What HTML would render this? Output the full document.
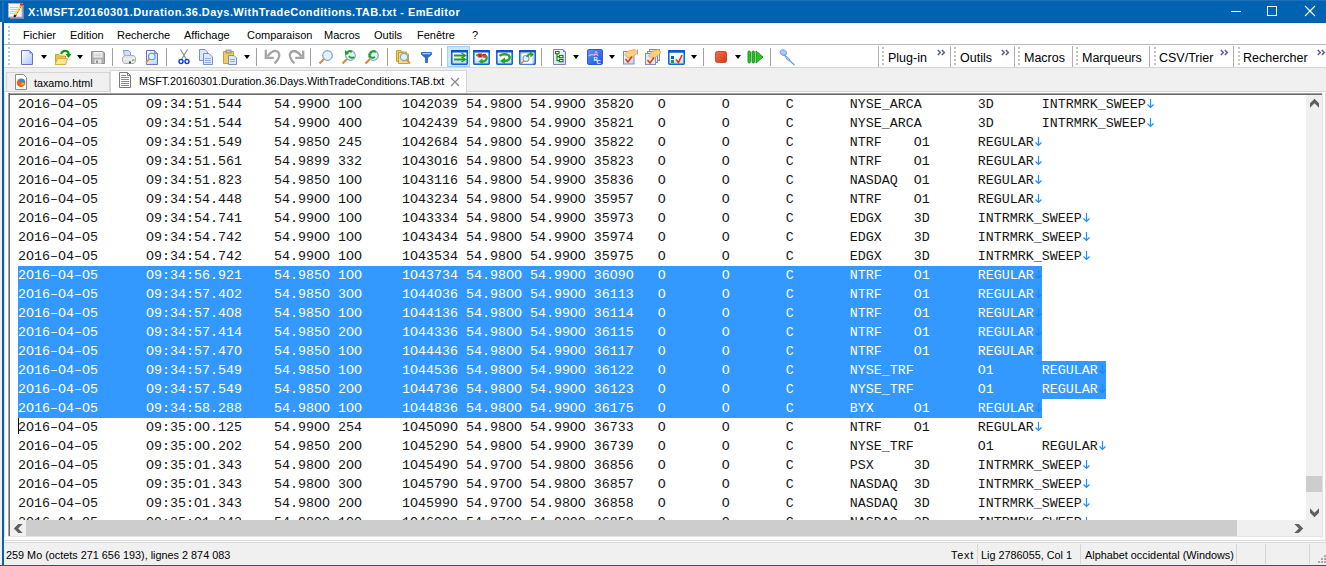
<!DOCTYPE html>
<html><head><meta charset="utf-8">
<style>
*{margin:0;padding:0;box-sizing:border-box}
html,body{width:1326px;height:566px;overflow:hidden;background:#f0f0f0;font-family:"Liberation Sans",sans-serif}
.a{position:absolute}
#title{left:0;top:0;width:1326px;height:23px;background:#0063b1}
#title .tl{left:0;top:22px;width:2px;height:1px;background:#f0f0f0}
#ttext{left:28px;top:5px;color:#fff;font-weight:bold;font-size:11px;letter-spacing:0.43px;white-space:nowrap;line-height:15px}
#lborder{left:2px;top:0;width:2px;height:566px;background:#0063b1}
#lborder2{left:2px;top:0;width:2px;height:22px;background:#1a70bb}
#bborder{left:0;top:565px;width:1326px;height:1px;background:#0063b1}
#menu{left:4px;top:23px;width:1322px;height:21px;background:#fff}
#menusep{left:4px;top:44px;width:1322px;height:1px;background:#b9b9b9}
.mi{position:absolute;top:6px;font-size:11px;line-height:13px;color:#000;white-space:nowrap}
#tb{left:4px;top:45px;width:1322px;height:22px;background:#fff}
#tbsep{left:4px;top:67px;width:1322px;height:1px;background:#d4d4d4}
.grip{position:absolute;width:2px;background-image:linear-gradient(#c4c4c4 50%,transparent 50%);background-size:2px 4px}
.vsep{position:absolute;width:1px;background:#a0a0a0}
.dd{position:absolute;width:0;height:0;border-left:3.5px solid transparent;border-right:3.5px solid transparent;border-top:4px solid #000}
.tbt{position:absolute;top:8px;font-size:12.5px;line-height:13px;color:#000;white-space:nowrap}
.chev{position:absolute;top:3px;font-size:9px;color:#404080;line-height:9px;letter-spacing:-1px}
#tabs{left:4px;top:68px;width:1322px;height:25px;background:#f0f0f0}
#tab1{left:6px;top:72px;width:104px;height:20px;background:#f0f0f0;border:1px solid #d5d5d5}
#tab2{left:110px;top:70px;width:357px;height:23px;background:#fff;border:1px solid #d5d5d5;border-bottom:none}
.tabt{position:absolute;font-size:10.75px;line-height:13px;color:#000;white-space:nowrap}
#ed{left:8px;top:93px;width:1315px;height:444px;background:#fff}
#edtop{left:8px;top:93px;width:1315px;height:2px;background:#696969;border-top:1px solid #a0a0a0}
#edleft{left:8px;top:93px;width:2px;height:444px;background:#696969;border-left:1px solid #a0a0a0}
#edbot{left:8px;top:536px;width:1315px;height:1px;background:#e3e3e3}
#edright{left:1322px;top:93px;width:1px;height:444px;background:#e3e3e3}
.row{position:absolute;left:18px;height:19px;width:1288px}
.row .t{position:absolute;left:0;top:0;font-family:"Liberation Mono",monospace;font-size:13.333px;line-height:19px;white-space:pre;color:#161616}
.row .nl{position:absolute;top:0;stroke:#1e90ff}
.row.sel .t{color:#fff}
.row.sel .nl{stroke:#1a88f8}
.selbg{position:absolute;left:0;top:0;height:19px;background:#3399ff}
#rows{left:0;top:0;width:1306px;height:520px;overflow:hidden}
#vsb{left:1306px;top:95px;width:16px;height:425px;background:#f0f0f0}
#hsb{left:10px;top:520px;width:1296px;height:16px;background:#f0f0f0}
#corner{left:1306px;top:520px;width:16px;height:16px;background:#f0f0f0}
#status{left:4px;top:537px;width:1322px;height:28px;background:#f0f0f0;border-top:3px solid #fff}
#stl1{left:4px;top:540px;width:1322px;height:1px;background:#d8d8d8}
#stl2{left:4px;top:541px;width:1322px;height:1px;background:#fff}
#stl3{left:4px;top:542px;width:1322px;height:1px;background:#d8d8d8}
.st{position:absolute;top:549px;font-size:10.85px;line-height:13px;color:#000;white-space:nowrap}
.ssep{position:absolute;top:544px;width:1px;height:20px;background:#d7d7d7}
</style></head><body>
<div class="a" id="title">
 <svg class="a" style="left:6px;top:2px" width="18" height="18" viewBox="0 0 18 18">
  <rect x="4" y="3" width="14" height="14" fill="#8088a8"/>
  <rect x="2.5" y="1.5" width="13.5" height="13.5" fill="#fff" stroke="#b8a8e8" stroke-width="1"/>
  <g stroke="#c0c4f0" stroke-width="1"><line x1="4" y1="5.5" x2="12" y2="5.5"/><line x1="4" y1="7.5" x2="11" y2="7.5"/><line x1="4" y1="9.5" x2="10" y2="9.5"/><line x1="4" y1="11.5" x2="9" y2="11.5"/></g>
  <line x1="16" y1="1.5" x2="8.5" y2="14.5" stroke="#f8e040" stroke-width="2.4"/>
  <line x1="16.6" y1="2" x2="9.2" y2="14.8" stroke="#e04828" stroke-width="1" stroke-dasharray="1.5 1.5"/>
  <line x1="16" y1="1.5" x2="14.8" y2="3.6" stroke="#e83020" stroke-width="2.6"/>
  <line x1="9.4" y1="13" x2="8.3" y2="15" stroke="#181818" stroke-width="2.2"/>
 </svg>
 <div class="a" style="left:0;top:0;width:1326px;height:1px;background:#1f6fba"></div>
 <div class="a" id="ttext">X:\MSFT.20160301.Duration.36.Days.WithTradeConditions.TAB.txt - EmEditor</div>
 <svg class="a" style="left:1226px;top:0" width="100" height="23">
  <line x1="5" y1="11.5" x2="15" y2="11.5" stroke="#fff" stroke-width="1"/>
  <rect x="41.5" y="6.5" width="9" height="9" fill="none" stroke="#fff" stroke-width="1"/>
  <line x1="79" y1="6" x2="89" y2="16" stroke="#fff" stroke-width="1.1"/>
  <line x1="89" y1="6" x2="79" y2="16" stroke="#fff" stroke-width="1.1"/>
 </svg>
</div>
<div class="a" style="left:0;top:22px;width:2px;height:543px;background:#f0f0f0"></div>
<div class="a" id="lborder"></div>
<div class="a" id="lborder2"></div>

<div class="a" id="menu">
 <div class="grip" style="left:4px;top:3px;height:18px"></div>
 <div class="mi" style="left:19px">Fichier</div>
 <div class="mi" style="left:66px">Edition</div>
 <div class="mi" style="left:113px">Recherche</div>
 <div class="mi" style="left:180px">Affichage</div>
 <div class="mi" style="left:243px">Comparaison</div>
 <div class="mi" style="left:320px">Macros</div>
 <div class="mi" style="left:370px">Outils</div>
 <div class="mi" style="left:413px">Fen&ecirc;tre</div>
 <div class="mi" style="left:468px">?</div>
</div>
<div class="a" id="menusep"></div>
<div class="a" style="left:4px;top:22px;width:1322px;height:1px;background:#005aa8"></div>
<div class="a" style="left:4px;top:23px;width:1322px;height:1px;background:#faf6ee"></div>

<div class="a" id="tb"></div>
<div class="a" id="tbsep"></div>
<div class="grip" style="left:8px;top:47px;height:20px"></div>
<svg class="a" style="left:20px;top:49px" width="15" height="17" viewBox="0 0 15 17"><defs><linearGradient id="gd" x1="0" y1="0" x2="1" y2="1"><stop offset="0" stop-color="#ffffff"/><stop offset="1" stop-color="#a8c8f8"/></linearGradient></defs><path d="M1.5 1.5H9.5L12.5 4.5V15.5H1.5Z" fill="url(#gd)" stroke="#6a70c0"/><path d="M9.5 1.5L12.5 4.5H9.5Z" fill="#6a8ae0"/></svg>
<div class="dd" style="left:41px;top:55px"></div>
<svg class="a" style="left:54px;top:49px" width="18" height="17" viewBox="0 0 18 17"><path d="M1.5 5.5H5L6.5 7H11.5V15.5H1.5Z" fill="#f0c040" stroke="#d0a028"/><path d="M1 15.5L3.5 9.5H13.5L11.5 15.5Z" fill="#fce890" stroke="#d8b040"/><path d="M7 5 Q9 0.5 13.5 2.5 Q15 3.5 14.5 5.5" fill="none" stroke="#109810" stroke-width="2.2"/><path d="M11.5 5H17.5L14.5 9Z" fill="#109810"/></svg>
<div class="dd" style="left:77px;top:55px"></div>
<svg class="a" style="left:90px;top:50px" width="16" height="15" viewBox="0 0 16 15"><path d="M1.5 1.5H13L14.5 3V13.5H1.5Z" fill="#b0b0b0" stroke="#909090"/><rect x="3.5" y="2" width="9" height="5.5" fill="#f8f8f8"/><g stroke="#b8b8b8" stroke-width="0.8"><line x1="4.5" y1="4" x2="11.5" y2="4"/><line x1="4.5" y1="5.8" x2="11.5" y2="5.8"/></g><rect x="4.5" y="9.5" width="7" height="4" fill="#e8e8e8"/><rect x="6" y="10.5" width="2" height="2.5" fill="#909090"/></svg>
<div class="vsep" style="left:112px;top:48px;height:18px"></div>
<svg class="a" style="left:122px;top:50px" width="16" height="16" viewBox="0 0 16 16"><path d="M1.5 0.5H6.5L8.5 2.5V7H2.5Z" fill="#cfe2fa" stroke="#6898e0" stroke-width="0.9"/><path d="M0.5 7.5L3 5.5H12L13.5 7.5V11.5L12 13.5H2L0.5 11.5Z" fill="#e4e4e4" stroke="#a8a8a8" stroke-width="0.9"/><path d="M1.5 9H13" stroke="#f8f8f8" stroke-width="1"/><rect x="10" y="9.5" width="2.5" height="1.2" fill="#58b050"/><rect x="7" y="11.5" width="2" height="2" fill="#404858"/></svg>
<svg class="a" style="left:145px;top:50px" width="16" height="16" viewBox="0 0 16 16"><defs><linearGradient id="pv" x1="0" y1="0" x2="1" y2="1"><stop offset="0" stop-color="#ffffff"/><stop offset="1" stop-color="#b8d4f8"/></linearGradient></defs><path d="M1.5 0.5H9.5L12.5 3.5V14.5H1.5Z" fill="url(#pv)" stroke="#6870c0"/><path d="M9.5 0.5V3.5H12.5" fill="#a8c0f0" stroke="#6870c0" stroke-width="0.8"/><circle cx="6.8" cy="6.5" r="3.3" fill="#dff6ff" stroke="#6890d8" stroke-width="1.1"/><line x1="4.3" y1="9.2" x2="1" y2="12.5" stroke="#f09030" stroke-width="1.8"/></svg>
<div class="vsep" style="left:166px;top:48px;height:18px"></div>
<svg class="a" style="left:178px;top:49px" width="12" height="16" viewBox="0 0 12 16"><path d="M2.5 0.5L8.5 10.5M9.5 0.5L3.5 10.5" stroke="#8a9098" stroke-width="1.3"/><circle cx="3" cy="12.5" r="2" fill="none" stroke="#1a48c0" stroke-width="1.5"/><circle cx="9" cy="12.5" r="2" fill="none" stroke="#1a48c0" stroke-width="1.5"/></svg>
<svg class="a" style="left:198px;top:49px" width="16" height="16" viewBox="0 0 16 16"><path d="M1.5 0.5H7L9.5 3V11.5H1.5Z" fill="#dbe8fa" stroke="#7d8dc8"/><path d="M5.5 4.5H11L14.5 8V15.5H5.5Z" fill="#dbe8fa" stroke="#7d8dc8"/><g stroke="#8ab0e8"><line x1="7" y1="9.5" x2="13" y2="9.5"/><line x1="7" y1="11.5" x2="13" y2="11.5"/><line x1="7" y1="13.5" x2="13" y2="13.5"/></g></svg>
<svg class="a" style="left:222px;top:49px" width="16" height="16" viewBox="0 0 16 16"><path d="M1.5 2.5H11.5V14.5H1.5Z" fill="#f2cc5a" stroke="#c8a030"/><rect x="4" y="1" width="5" height="3" fill="#c0c0c0" stroke="#888" stroke-width="0.8"/><path d="M6.5 6.5H12L14.5 9V15.5H6.5Z" fill="#dbe8fa" stroke="#7d8dc8"/><g stroke="#8ab0e8"><line x1="8" y1="10.5" x2="13" y2="10.5"/><line x1="8" y1="12.5" x2="13" y2="12.5"/></g></svg>
<div class="dd" style="left:244px;top:55px"></div>
<div class="vsep" style="left:256px;top:48px;height:18px"></div>
<svg class="a" style="left:264px;top:49px" width="17" height="16" viewBox="0 0 17 16"><path d="M1.8 0.8V8.8H9.8" fill="none" stroke="#a4a4a4" stroke-width="2.3"/><path d="M3.5 7.5 Q7 2 11 1.8 Q15 2 15.3 5.8 Q15.3 10 10.5 14.5" fill="none" stroke="#a4a4a4" stroke-width="2.3"/></svg>
<svg class="a" style="left:288px;top:49px" width="17" height="16" viewBox="0 0 17 16"><path d="M15.2 1.8V8.8H7.2" fill="none" stroke="#a4a4a4" stroke-width="2.3"/><path d="M13.5 7.5 Q10 2.5 6.5 2 Q2 2.5 1.8 6 Q2 10 6.5 14.5" fill="none" stroke="#a4a4a4" stroke-width="2.3"/></svg>
<div class="vsep" style="left:310px;top:48px;height:18px"></div>
<svg class="a" style="left:318px;top:49px" width="16" height="16" viewBox="0 0 16 16"><line x1="6" y1="10" x2="1.5" y2="14.5" stroke="#e08830" stroke-width="2.2"/><circle cx="9.5" cy="6.5" r="4.8" fill="#e4f2ff" stroke="#7aa8d8" stroke-width="1.2"/></svg>
<svg class="a" style="left:341px;top:49px" width="16" height="16" viewBox="0 0 16 16"><line x1="6" y1="10" x2="1.5" y2="14.5" stroke="#e08830" stroke-width="2.2"/><circle cx="9.5" cy="6.5" r="4.8" fill="#e4f2ff" stroke="#7aa8d8" stroke-width="1.2"/><path d="M5 4 Q8 1 11 3" fill="none" stroke="#20a020" stroke-width="1.8"/><path d="M4 1L4 6L8 5Z" fill="#20a020"/><path d="M8 7 Q10 10 13 8" fill="none" stroke="#20a020" stroke-width="1.8"/></svg>
<svg class="a" style="left:364px;top:49px" width="16" height="16" viewBox="0 0 16 16"><line x1="6" y1="10" x2="1.5" y2="14.5" stroke="#e08830" stroke-width="2.2"/><circle cx="9.5" cy="6.5" r="4.8" fill="#e4f2ff" stroke="#7aa8d8" stroke-width="1.2"/><path d="M6 4 Q9 1 12 3" fill="none" stroke="#20a020" stroke-width="1.8"/><path d="M5 7 Q8 10 11 8" fill="none" stroke="#20a020" stroke-width="1.8"/><path d="M4 5L8 4L6 8Z" fill="#20a020"/></svg>
<div class="vsep" style="left:387px;top:48px;height:18px"></div>
<svg class="a" style="left:395px;top:49px" width="18" height="16" viewBox="0 0 18 16"><path d="M1.5 1.5H6L7 3H11.5V12.5H1.5Z" fill="#f2cc5a" stroke="#c8a030"/><path d="M3.5 3.5H8L9 5H13.5V14.5H3.5Z" fill="#f8da80" stroke="#c8a030"/><circle cx="9" cy="8" r="3.6" fill="#dff0ff" stroke="#7aa8d8" stroke-width="1.2"/><line x1="11.5" y1="10.5" x2="15" y2="14.5" stroke="#e08830" stroke-width="1.8"/></svg>
<svg class="a" style="left:421px;top:52px" width="11" height="11" viewBox="0 0 11 11"><path d="M0.5 0.5H10.5V2.5L6.5 6V10.5H4.5V6L0.5 2.5Z" fill="#2a68d8" stroke="#1a50b8" stroke-width="0.7"/><rect x="1.5" y="1" width="8" height="1.3" fill="#a8c8f8"/></svg>
<div class="vsep" style="left:441px;top:48px;height:18px"></div>
<div class="a" style="left:447px;top:46px;width:23px;height:21px;background:#cce8ff;border:1px solid #99d1ff"></div>
<svg class="a" style="left:451px;top:50px" width="17" height="15" viewBox="0 0 17 15"><defs><linearGradient id="fg451" x1="0" y1="0" x2="0" y2="1"><stop offset="0.45" stop-color="#ffffff"/><stop offset="1" stop-color="#b4cdf0"/></linearGradient></defs><rect x="0.8" y="0.8" width="15.4" height="13.4" rx="0.6" fill="url(#fg451)" stroke="#1462dc" stroke-width="1.6"/><rect x="0" y="0" width="17" height="2.6" rx="1" fill="#0a52cc"/><g stroke="#1aa01a" stroke-width="2"><line x1="3" y1="5.5" x2="14" y2="5.5"/><line x1="3" y1="9.5" x2="14" y2="9.5"/></g><path d="M10.5 3L14.5 5.5L10.5 8M10.5 7L14.5 9.5L10.5 12" fill="none" stroke="#1aa01a" stroke-width="1.4"/></svg>
<svg class="a" style="left:473px;top:50px" width="17" height="15" viewBox="0 0 17 15"><defs><linearGradient id="fg473" x1="0" y1="0" x2="0" y2="1"><stop offset="0.45" stop-color="#ffffff"/><stop offset="1" stop-color="#b4cdf0"/></linearGradient></defs><rect x="0.8" y="0.8" width="15.4" height="13.4" rx="0.6" fill="url(#fg473)" stroke="#1462dc" stroke-width="1.6"/><rect x="0" y="0" width="17" height="2.6" rx="1" fill="#0a52cc"/><path d="M3.5 6 Q5 4 8 5.5 H12 Q15 6.5 13 10 Q11 12 8 11.5" fill="none" stroke="#20a820" stroke-width="2.2"/><path d="M9.5 8.5L5.5 11.5L9.5 14Z" fill="#20a820"/><path d="M5.5 3.5L8.5 7.5M8.5 3.5L5.5 7.5" stroke="#d01818" stroke-width="1.5"/><g stroke="#d01818" stroke-width="1.2"><line x1="9.5" y1="4.5" x2="13" y2="4.5"/><line x1="9.5" y1="7" x2="13" y2="7"/></g></svg>
<svg class="a" style="left:496px;top:50px" width="17" height="15" viewBox="0 0 17 15"><defs><linearGradient id="fg496" x1="0" y1="0" x2="0" y2="1"><stop offset="0.45" stop-color="#ffffff"/><stop offset="1" stop-color="#b4cdf0"/></linearGradient></defs><rect x="0.8" y="0.8" width="15.4" height="13.4" rx="0.6" fill="url(#fg496)" stroke="#1462dc" stroke-width="1.6"/><rect x="0" y="0" width="17" height="2.6" rx="1" fill="#0a52cc"/><path d="M3.5 6 Q6 3.5 11 4.5 Q15 6 13 9.5 Q11.5 11 8 11" fill="none" stroke="#20a820" stroke-width="2.4"/><path d="M9 7.5L4 11L9 14Z" fill="#20a820"/></svg>
<svg class="a" style="left:519px;top:50px" width="17" height="15" viewBox="0 0 17 15"><defs><linearGradient id="fg519" x1="0" y1="0" x2="0" y2="1"><stop offset="0.45" stop-color="#ffffff"/><stop offset="1" stop-color="#b4cdf0"/></linearGradient></defs><rect x="0.8" y="0.8" width="15.4" height="13.4" rx="0.6" fill="url(#fg519)" stroke="#1462dc" stroke-width="1.6"/><rect x="0" y="0" width="17" height="2.6" rx="1" fill="#0a52cc"/><rect x="2" y="3" width="12" height="11" fill="#fff" stroke="#a0a8c8" stroke-width="0.8"/><circle cx="7" cy="8.5" r="3" fill="#e8f4ff" stroke="#7a98c8" stroke-width="1.1"/><line x1="4.8" y1="10.8" x2="2" y2="14" stroke="#e08830" stroke-width="1.6"/><path d="M8 7 Q9 3.5 13 4" fill="none" stroke="#20a820" stroke-width="2"/><path d="M11 1.5L15 4.5L11.5 7.5Z" fill="#20a820"/></svg>
<div class="vsep" style="left:541px;top:48px;height:18px"></div>
<svg class="a" style="left:553px;top:49px" width="13" height="16" viewBox="0 0 13 16"><defs><linearGradient id="ol" x1="0" y1="0" x2="1" y2="1"><stop offset="0" stop-color="#ffffff"/><stop offset="1" stop-color="#c8d8f4"/></linearGradient></defs><path d="M0.5 0.5H10L12.5 3V15.5H0.5Z" fill="url(#ol)" stroke="#7880c0"/><path d="M10 0.5V3H12.5Z" fill="#5a8ae0"/><g fill="#fff" stroke="#108010" stroke-width="1.1"><rect x="2.5" y="2.5" width="3.5" height="2.2"/><rect x="6.5" y="6.5" width="3.5" height="2.2"/><rect x="6.5" y="10.5" width="3.5" height="2.2"/></g><path d="M4 4.7V11.6H6.5M4 7.6H6.5" fill="none" stroke="#108010" stroke-width="1.1"/></svg>
<div class="dd" style="left:573px;top:55px"></div>
<svg class="a" style="left:587px;top:49px" width="16" height="16" viewBox="0 0 16 16"><defs><linearGradient id="abc" x1="0" y1="0" x2="1" y2="1"><stop offset="0" stop-color="#5a9af8"/><stop offset="1" stop-color="#1a50e0"/></linearGradient></defs><rect x="0.5" y="0.5" width="15" height="15" rx="1.5" fill="url(#abc)" stroke="#2a60e0"/><path d="M1.5 7 Q4 5 8 6" fill="none" stroke="#f0a8e0" stroke-width="1.2"/><text x="6.5" y="7" font-size="6.5" font-weight="bold" font-family="Liberation Sans" fill="#f0a8e0">A</text><text x="6.5" y="11.5" font-size="6" font-weight="bold" font-family="Liberation Sans" fill="#e8f8ff">B</text><text x="9.5" y="15" font-size="6" font-weight="bold" font-family="Liberation Sans" fill="#ffffff">C</text></svg>
<div class="dd" style="left:609px;top:55px"></div>
<svg class="a" style="left:622px;top:49px" width="17" height="16" viewBox="0 0 17 16"><defs><linearGradient id="ck" x1="0" y1="0" x2="1" y2="1"><stop offset="0" stop-color="#ffffff"/><stop offset="1" stop-color="#b8d4f4"/></linearGradient></defs><rect x="1.5" y="2.5" width="10.5" height="12.5" fill="url(#ck)" stroke="#7d8dc8"/><path d="M2.5 6 L6 2 L13 0.5 L16 3.5 L10 8.5 L6 9Z" fill="#fbcf80" stroke="#f8a040" stroke-width="0.8"/><line x1="15.5" y1="0.5" x2="15.5" y2="5.5" stroke="#9a9ae8"/><path d="M3.5 10L6 13L10 7.5" fill="none" stroke="#e83a10" stroke-width="1.6"/></svg>
<svg class="a" style="left:644px;top:49px" width="18" height="16" viewBox="0 0 18 16"><rect x="5.5" y="0.5" width="10" height="11" fill="#d8e8f8" stroke="#7d8dc8"/><rect x="3.5" y="2.5" width="10" height="11" fill="#d8e8f8" stroke="#7d8dc8"/><rect x="1.5" y="4.5" width="10" height="11" fill="#e0ecf8" stroke="#7d8dc8"/><path d="M4.5 7 L8 2.5 L14.5 0.5 L17 3.5 L11.5 8.5 L7.5 9Z" fill="#fbcf80" stroke="#f8a040" stroke-width="0.8"/><path d="M3.5 11L6 14L10 8.5" fill="none" stroke="#e83a10" stroke-width="1.6"/></svg>
<svg class="a" style="left:668px;top:49px" width="18" height="16" viewBox="0 0 18 16"><defs><linearGradient id="tc" x1="0" y1="0" x2="0" y2="1"><stop offset="0.3" stop-color="#ffffff"/><stop offset="1" stop-color="#c8dcf4"/></linearGradient></defs><rect x="0.8" y="1.8" width="15.4" height="13.4" rx="0.6" fill="url(#tc)" stroke="#1468dc" stroke-width="1.6"/><rect x="0" y="1" width="17" height="2.8" rx="1" fill="#0a5ad8"/><rect x="3" y="7" width="3" height="3" fill="#1a55d0"/><rect x="3" y="11" width="3" height="3" fill="#18a030"/><path d="M8 10.5L10.5 13.5L14 6" fill="none" stroke="#e83a10" stroke-width="1.6"/></svg>
<div class="dd" style="left:691px;top:55px"></div>
<div class="vsep" style="left:703px;top:48px;height:18px"></div>
<svg class="a" style="left:715px;top:51px" width="12" height="12" viewBox="0 0 12 12"><defs><linearGradient id="rs" x1="0" y1="0" x2="1" y2="1"><stop offset="0" stop-color="#f07050"/><stop offset="1" stop-color="#d83810"/></linearGradient></defs><rect x="0.5" y="0.5" width="11" height="11" rx="1.8" fill="url(#rs)" stroke="#c83010" stroke-width="0.8"/></svg>
<div class="dd" style="left:735px;top:55px"></div>
<svg class="a" style="left:747px;top:50px" width="17" height="14" viewBox="0 0 17 14"><g fill="#30c030" stroke="#109010" stroke-width="0.9"><rect x="1" y="1" width="2.4" height="12" rx="1.2"/><rect x="5" y="1" width="2.4" height="12" rx="1.2"/><path d="M9 1L16 7L9 13Z"/></g></svg>
<div class="vsep" style="left:770px;top:48px;height:18px"></div>
<svg class="a" style="left:778px;top:48px" width="18" height="18" viewBox="0 0 18 18"><g fill="#a8c8ff" stroke="#6898e8" stroke-width="0.9"><path d="M2 3.5 Q3.5 0.8 6.5 2 L8.5 4 Q9 6 7.5 7 L5 7.5 Q2 6.5 2 3.5Z"/><path d="M6 6.5L11 10.5L12 12.5L9.5 12L6.5 7.5Z"/></g><line x1="11" y1="12" x2="16.5" y2="17" stroke="#6898e8" stroke-width="1.2"/></svg>
<div class="vsep" style="left:878px;top:46px;height:21px;background:#b0b0b0"></div>
<div class="grip" style="left:882px;top:47px;height:20px"></div><div class="tbt" style="left:888px;top:52px">Plug-in</div><svg class="a" style="left:937px;top:49px" width="9" height="7" viewBox="0 0 9 7"><path d="M0.8 1L3.3 3.5L0.8 6M4.8 1L7.3 3.5L4.8 6" fill="none" stroke="#5a5aa0" stroke-width="1.5"/></svg><div class="vsep" style="left:950px;top:46px;height:21px;background:#b0b0b0"></div>
<div class="grip" style="left:954px;top:47px;height:20px"></div><div class="tbt" style="left:960px;top:52px">Outils</div><svg class="a" style="left:1001px;top:49px" width="9" height="7" viewBox="0 0 9 7"><path d="M0.8 1L3.3 3.5L0.8 6M4.8 1L7.3 3.5L4.8 6" fill="none" stroke="#5a5aa0" stroke-width="1.5"/></svg><div class="vsep" style="left:1014px;top:46px;height:21px;background:#b0b0b0"></div>
<div class="grip" style="left:1018px;top:47px;height:20px"></div><div class="tbt" style="left:1024px;top:52px">Macros</div><div class="vsep" style="left:1072px;top:46px;height:21px;background:#b0b0b0"></div>
<div class="grip" style="left:1076px;top:47px;height:20px"></div><div class="tbt" style="left:1082px;top:52px">Marqueurs</div><div class="vsep" style="left:1149px;top:46px;height:21px;background:#b0b0b0"></div>
<div class="grip" style="left:1154px;top:47px;height:20px"></div><div class="tbt" style="left:1159px;top:52px">CSV/Trier</div><svg class="a" style="left:1220px;top:49px" width="9" height="7" viewBox="0 0 9 7"><path d="M0.8 1L3.3 3.5L0.8 6M4.8 1L7.3 3.5L4.8 6" fill="none" stroke="#5a5aa0" stroke-width="1.5"/></svg><div class="vsep" style="left:1233px;top:46px;height:21px;background:#b0b0b0"></div>
<div class="grip" style="left:1238px;top:47px;height:20px"></div><div class="tbt" style="left:1243px;top:52px">Rechercher</div><svg class="a" style="left:1317px;top:49px" width="9" height="7" viewBox="0 0 9 7"><path d="M0.8 1L3.3 3.5L0.8 6M4.8 1L7.3 3.5L4.8 6" fill="none" stroke="#5a5aa0" stroke-width="1.5"/></svg>

<div class="a" id="tabs"></div>
<div class="a" style="left:4px;top:91px;width:1322px;height:1px;background:#d5d5d5"></div>
<div class="a" style="left:1325px;top:92px;width:1px;height:449px;background:#dcdcdc"></div>
<div class="a" style="left:4px;top:92px;width:1322px;height:1px;background:#fff"></div>
<div class="a" id="tab1">
 <svg class="a" style="left:8px;top:1px" width="12" height="16" viewBox="0 0 12 16">
  <path d="M0.5 0.5H8.5L11.5 3.5V15.5H0.5Z" fill="#fff" stroke="#8c8c8c"/>
  <circle cx="6" cy="8.8" r="4.3" fill="#e8661a"/>
  <path d="M3.5 5.8 Q6 3.8 9.3 5.5 Q10.5 7.5 9.8 9.5 Q8.5 7 6.5 8.5 Q5.5 7 3.5 5.8Z" fill="#2a8ae0"/>
  <path d="M6.5 8.5 Q7 10.5 5.5 11 Q8.5 11.5 9.8 9.5" fill="#f5c020"/>
 </svg>
 <div class="tabt" style="left:27px;top:4px">taxamo.html</div>
</div>
<div class="a" id="tab2">
 <svg class="a" style="left:8px;top:1px" width="12" height="16" viewBox="0 0 12 16">
  <path d="M0.5 0.5H8.5L11.5 3.5V15.5H0.5Z" fill="#fff" stroke="#7a7a7a"/>
  <path d="M8.5 0.5V3.5H11.5" fill="none" stroke="#7a7a7a"/>
  <g stroke="#8a8a8a"><line x1="2" y1="3.5" x2="7" y2="3.5"/><line x1="2" y1="5.5" x2="10" y2="5.5"/><line x1="2" y1="7.5" x2="10" y2="7.5"/><line x1="2" y1="9.5" x2="10" y2="9.5"/><line x1="2" y1="11.5" x2="10" y2="11.5"/><line x1="2" y1="13.5" x2="10" y2="13.5"/></g>
 </svg>
 <div class="tabt" style="left:28px;top:4px">MSFT.20160301.Duration.36.Days.WithTradeConditions.TAB.txt</div>
 <svg class="a" style="left:339px;top:6px" width="10" height="10"><path d="M1 1L9 9M9 1L1 9" stroke="#8a8a8a" stroke-width="1.2"/></svg>
</div>

<div class="a" style="left:4px;top:92px;width:1px;height:449px;background:#dcdcdc"></div>
<div class="a" style="left:5px;top:92px;width:3px;height:448px;background:#fff"></div>
<div class="a" id="ed">
</div>
<div class="a" id="rows">
<div class="row" style="top:95px"><span class="t">2O16&#8211;O4&#8211;O5      O9:34:51.544    54.99OO 1OO     1O42O39 54.98OO 54.99OO 3582O   O       O       C       NYSE_ARCA       3D      INTRMRK_SWEEP</span><svg class="nl" style="left:1128px" width="8" height="19" viewBox="0 0 8 19"><path d="M4.5 4V12.5M1.5 9.5L4.5 12.5L7.5 9.5" fill="none" stroke-width="1.2"/></svg></div>
<div class="row" style="top:114px"><span class="t">2O16&#8211;O4&#8211;O5      O9:34:51.544    54.99OO 4OO     1O42439 54.98OO 54.99OO 35821   O       O       C       NYSE_ARCA       3D      INTRMRK_SWEEP</span><svg class="nl" style="left:1128px" width="8" height="19" viewBox="0 0 8 19"><path d="M4.5 4V12.5M1.5 9.5L4.5 12.5L7.5 9.5" fill="none" stroke-width="1.2"/></svg></div>
<div class="row" style="top:133px"><span class="t">2O16&#8211;O4&#8211;O5      O9:34:51.549    54.985O 245     1O42684 54.98OO 54.99OO 35822   O       O       C       NTRF    O1      REGULAR</span><svg class="nl" style="left:1016px" width="8" height="19" viewBox="0 0 8 19"><path d="M4.5 4V12.5M1.5 9.5L4.5 12.5L7.5 9.5" fill="none" stroke-width="1.2"/></svg></div>
<div class="row" style="top:152px"><span class="t">2O16&#8211;O4&#8211;O5      O9:34:51.561    54.9899 332     1O43O16 54.98OO 54.99OO 35823   O       O       C       NTRF    O1      REGULAR</span><svg class="nl" style="left:1016px" width="8" height="19" viewBox="0 0 8 19"><path d="M4.5 4V12.5M1.5 9.5L4.5 12.5L7.5 9.5" fill="none" stroke-width="1.2"/></svg></div>
<div class="row" style="top:171px"><span class="t">2O16&#8211;O4&#8211;O5      O9:34:51.823    54.985O 1OO     1O43116 54.98OO 54.99OO 35836   O       O       C       NASDAQ  O1      REGULAR</span><svg class="nl" style="left:1016px" width="8" height="19" viewBox="0 0 8 19"><path d="M4.5 4V12.5M1.5 9.5L4.5 12.5L7.5 9.5" fill="none" stroke-width="1.2"/></svg></div>
<div class="row" style="top:190px"><span class="t">2O16&#8211;O4&#8211;O5      O9:34:54.448    54.99OO 1OO     1O43234 54.98OO 54.99OO 35957   O       O       C       NTRF    O1      REGULAR</span><svg class="nl" style="left:1016px" width="8" height="19" viewBox="0 0 8 19"><path d="M4.5 4V12.5M1.5 9.5L4.5 12.5L7.5 9.5" fill="none" stroke-width="1.2"/></svg></div>
<div class="row" style="top:209px"><span class="t">2O16&#8211;O4&#8211;O5      O9:34:54.741    54.99OO 1OO     1O43334 54.98OO 54.99OO 35973   O       O       C       EDGX    3D      INTRMRK_SWEEP</span><svg class="nl" style="left:1064px" width="8" height="19" viewBox="0 0 8 19"><path d="M4.5 4V12.5M1.5 9.5L4.5 12.5L7.5 9.5" fill="none" stroke-width="1.2"/></svg></div>
<div class="row" style="top:228px"><span class="t">2O16&#8211;O4&#8211;O5      O9:34:54.742    54.99OO 1OO     1O43434 54.98OO 54.99OO 35974   O       O       C       EDGX    3D      INTRMRK_SWEEP</span><svg class="nl" style="left:1064px" width="8" height="19" viewBox="0 0 8 19"><path d="M4.5 4V12.5M1.5 9.5L4.5 12.5L7.5 9.5" fill="none" stroke-width="1.2"/></svg></div>
<div class="row" style="top:247px"><span class="t">2O16&#8211;O4&#8211;O5      O9:34:54.742    54.99OO 1OO     1O43534 54.98OO 54.99OO 35975   O       O       C       EDGX    3D      INTRMRK_SWEEP</span><svg class="nl" style="left:1064px" width="8" height="19" viewBox="0 0 8 19"><path d="M4.5 4V12.5M1.5 9.5L4.5 12.5L7.5 9.5" fill="none" stroke-width="1.2"/></svg></div>
<div class="row sel" style="top:266px"><div class="selbg" style="width:1024px"></div><span class="t">2O16&#8211;O4&#8211;O5      O9:34:56.921    54.985O 1OO     1O43734 54.98OO 54.99OO 36O9O   O       O       C       NTRF    O1      REGULAR</span><svg class="nl" style="left:1016px" width="8" height="19" viewBox="0 0 8 19"><path d="M4.5 4V12.5M1.5 9.5L4.5 12.5L7.5 9.5" fill="none" stroke-width="1.2"/></svg></div>
<div class="row sel" style="top:285px"><div class="selbg" style="width:1024px"></div><span class="t">2O16&#8211;O4&#8211;O5      O9:34:57.4O2    54.985O 3OO     1O44O36 54.98OO 54.99OO 36113   O       O       C       NTRF    O1      REGULAR</span><svg class="nl" style="left:1016px" width="8" height="19" viewBox="0 0 8 19"><path d="M4.5 4V12.5M1.5 9.5L4.5 12.5L7.5 9.5" fill="none" stroke-width="1.2"/></svg></div>
<div class="row sel" style="top:304px"><div class="selbg" style="width:1024px"></div><span class="t">2O16&#8211;O4&#8211;O5      O9:34:57.4O8    54.985O 1OO     1O44136 54.98OO 54.99OO 36114   O       O       C       NTRF    O1      REGULAR</span><svg class="nl" style="left:1016px" width="8" height="19" viewBox="0 0 8 19"><path d="M4.5 4V12.5M1.5 9.5L4.5 12.5L7.5 9.5" fill="none" stroke-width="1.2"/></svg></div>
<div class="row sel" style="top:323px"><div class="selbg" style="width:1024px"></div><span class="t">2O16&#8211;O4&#8211;O5      O9:34:57.414    54.985O 2OO     1O44336 54.98OO 54.99OO 36115   O       O       C       NTRF    O1      REGULAR</span><svg class="nl" style="left:1016px" width="8" height="19" viewBox="0 0 8 19"><path d="M4.5 4V12.5M1.5 9.5L4.5 12.5L7.5 9.5" fill="none" stroke-width="1.2"/></svg></div>
<div class="row sel" style="top:342px"><div class="selbg" style="width:1024px"></div><span class="t">2O16&#8211;O4&#8211;O5      O9:34:57.47O    54.985O 1OO     1O44436 54.98OO 54.99OO 36117   O       O       C       NTRF    O1      REGULAR</span><svg class="nl" style="left:1016px" width="8" height="19" viewBox="0 0 8 19"><path d="M4.5 4V12.5M1.5 9.5L4.5 12.5L7.5 9.5" fill="none" stroke-width="1.2"/></svg></div>
<div class="row sel" style="top:361px"><div class="selbg" style="width:1088px"></div><span class="t">2O16&#8211;O4&#8211;O5      O9:34:57.549    54.985O 1OO     1O44536 54.98OO 54.99OO 36122   O       O       C       NYSE_TRF        O1      REGULAR</span><svg class="nl" style="left:1080px" width="8" height="19" viewBox="0 0 8 19"><path d="M4.5 4V12.5M1.5 9.5L4.5 12.5L7.5 9.5" fill="none" stroke-width="1.2"/></svg></div>
<div class="row sel" style="top:380px"><div class="selbg" style="width:1088px"></div><span class="t">2O16&#8211;O4&#8211;O5      O9:34:57.549    54.985O 2OO     1O44736 54.98OO 54.99OO 36123   O       O       C       NYSE_TRF        O1      REGULAR</span><svg class="nl" style="left:1080px" width="8" height="19" viewBox="0 0 8 19"><path d="M4.5 4V12.5M1.5 9.5L4.5 12.5L7.5 9.5" fill="none" stroke-width="1.2"/></svg></div>
<div class="row sel" style="top:399px"><div class="selbg" style="width:1024px"></div><span class="t">2O16&#8211;O4&#8211;O5      O9:34:58.288    54.98OO 1OO     1O44836 54.98OO 54.99OO 36175   O       O       C       BYX     O1      REGULAR</span><svg class="nl" style="left:1016px" width="8" height="19" viewBox="0 0 8 19"><path d="M4.5 4V12.5M1.5 9.5L4.5 12.5L7.5 9.5" fill="none" stroke-width="1.2"/></svg></div>
<div class="row" style="top:418px"><span class="t">2O16&#8211;O4&#8211;O5      O9:35:OO.125    54.99OO 254     1O45O9O 54.98OO 54.99OO 36733   O       O       C       NTRF    O1      REGULAR</span><svg class="nl" style="left:1016px" width="8" height="19" viewBox="0 0 8 19"><path d="M4.5 4V12.5M1.5 9.5L4.5 12.5L7.5 9.5" fill="none" stroke-width="1.2"/></svg></div>
<div class="row" style="top:437px"><span class="t">2O16&#8211;O4&#8211;O5      O9:35:OO.2O2    54.985O 2OO     1O4529O 54.98OO 54.99OO 36739   O       O       C       NYSE_TRF        O1      REGULAR</span><svg class="nl" style="left:1080px" width="8" height="19" viewBox="0 0 8 19"><path d="M4.5 4V12.5M1.5 9.5L4.5 12.5L7.5 9.5" fill="none" stroke-width="1.2"/></svg></div>
<div class="row" style="top:456px"><span class="t">2O16&#8211;O4&#8211;O5      O9:35:O1.343    54.98OO 2OO     1O4549O 54.97OO 54.98OO 36856   O       O       C       PSX     3D      INTRMRK_SWEEP</span><svg class="nl" style="left:1064px" width="8" height="19" viewBox="0 0 8 19"><path d="M4.5 4V12.5M1.5 9.5L4.5 12.5L7.5 9.5" fill="none" stroke-width="1.2"/></svg></div>
<div class="row" style="top:475px"><span class="t">2O16&#8211;O4&#8211;O5      O9:35:O1.343    54.98OO 3OO     1O4579O 54.97OO 54.98OO 36857   O       O       C       NASDAQ  3D      INTRMRK_SWEEP</span><svg class="nl" style="left:1064px" width="8" height="19" viewBox="0 0 8 19"><path d="M4.5 4V12.5M1.5 9.5L4.5 12.5L7.5 9.5" fill="none" stroke-width="1.2"/></svg></div>
<div class="row" style="top:494px"><span class="t">2O16&#8211;O4&#8211;O5      O9:35:O1.343    54.98OO 2OO     1O4599O 54.97OO 54.98OO 36858   O       O       C       NASDAQ  3D      INTRMRK_SWEEP</span><svg class="nl" style="left:1064px" width="8" height="19" viewBox="0 0 8 19"><path d="M4.5 4V12.5M1.5 9.5L4.5 12.5L7.5 9.5" fill="none" stroke-width="1.2"/></svg></div>
<div class="row" style="top:513px"><span class="t">2O16&#8211;O4&#8211;O5      O9:35:O1.343    54.98OO 1OO     1O46O9O 54.97OO 54.98OO 36859   O       O       C       NASDAQ  3D      INTRMRK_SWEEP</span><svg class="nl" style="left:1064px" width="8" height="19" viewBox="0 0 8 19"><path d="M4.5 4V12.5M1.5 9.5L4.5 12.5L7.5 9.5" fill="none" stroke-width="1.2"/></svg></div>
</div>
<div class="a" id="caret" style="left:18px;top:418px;width:1px;height:16px;background:#000"></div>
<div class="a" id="edtop"></div>
<div class="a" id="edleft"></div>
<div class="a" id="edbot"></div>
<div class="a" id="edright"></div>
<div class="a" id="vsb">
 <svg class="a" style="left:1px;top:2px" width="14" height="12"><polygon points="3,6.3 7.5,1.8 12,6.3 12,10.7 7.5,6.2 3,10.7" fill="#606060"/></svg>
 <div class="a" style="left:0;top:381px;width:16px;height:16px;background:#cdcdcd"></div>
 <svg class="a" style="left:1px;top:412px" width="14" height="12"><polygon points="3,1.3 7.5,5.8 12,1.3 12,5.7 7.5,10.2 3,5.7" fill="#606060"/></svg>
</div>
<div class="a" id="hsb">
 <svg class="a" style="left:2px;top:1px" width="12" height="14"><polygon points="6.3,3 1.8,7.5 6.3,12 10.7,12 6.2,7.5 10.7,3" fill="#606060"/></svg>
 <div class="a" style="left:16px;top:0;width:1211px;height:16px;background:#cdcdcd"></div>
 <svg class="a" style="left:1283px;top:1px" width="12" height="14"><polygon points="5.7,3 10.2,7.5 5.7,12 1.3,12 5.8,7.5 1.3,3" fill="#606060"/></svg>
</div>
<div class="a" id="corner"></div>

<div class="a" id="status"></div><div class="a" style="left:1325px;top:537px;width:1px;height:4px;background:#dcdcdc"></div><div class="a" id="stl1"></div><div class="a" id="stl2"></div><div class="a" id="stl3"></div>
<div class="a" style="left:1323px;top:93px;width:2px;height:447px;background:#fff"></div>
<svg class="a" style="left:1316px;top:553px" width="10" height="11"><g fill="#a8a8a8"><rect x="8" y="2" width="2" height="2"/><rect x="5" y="5" width="2" height="2"/><rect x="8" y="5" width="2" height="2"/><rect x="2" y="8" width="2" height="2"/><rect x="5" y="8" width="2" height="2"/><rect x="8" y="8" width="2" height="2"/></g></svg>
<div class="st" style="left:6px">259 Mo (octets 271 656 193), lignes 2 874 083</div>
<div class="st" style="left:951px;letter-spacing:0.8px">Text</div>
<div class="ssep" style="left:977px"></div>
<div class="st" style="left:981px">Lig 2786055, Col 1</div>
<div class="ssep" style="left:1080px"></div>
<div class="st" style="left:1085px">Alphabet occidental (Windows)</div>
<div class="ssep" style="left:1236px"></div>
<div class="ssep" style="left:1265px"></div>
<div class="ssep" style="left:1309px"></div>
<div class="a" id="bborder"></div>
</body></html>
